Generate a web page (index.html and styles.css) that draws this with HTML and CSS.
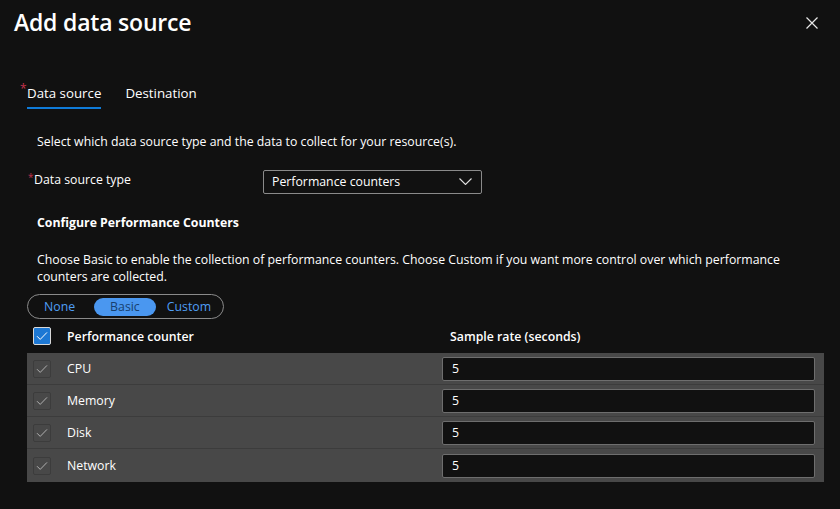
FILE: index.html
```html
<!DOCTYPE html>
<html lang="en">
<head>
<meta charset="utf-8">
<title>Add data source</title>
<link rel="stylesheet" href="styles.css">
</head>
<body>
<div class="panel">
  <header class="header">
    <h1 class="title">Add data source</h1>
    <button class="close" aria-label="Close">
      <svg width="12" height="12" viewBox="0 0 12 12"><path d="M0.5 0.5L11.5 11.5M11.5 0.5L0.5 11.5" stroke="#e8e8e8" stroke-width="1.2" fill="none"/></svg>
    </button>
  </header>

  <nav class="tabs">
    <div class="tab active"><span class="req">*</span><span class="tab-label">Data source</span></div>
    <div class="tab"><span class="tab-label">Destination</span></div>
  </nav>

  <section class="content">
    <p class="intro">Select which data source type and the data to collect for your resource(s).</p>

    <div class="field">
      <label class="field-label"><span class="req small">*</span>Data source type</label>
      <div class="dropdown">
        <span>Performance counters</span>
        <svg width="13" height="7" viewBox="0 0 13 7"><path d="M0.5 0.5L6.5 6.5L12.5 0.5" stroke="#e0e0e0" stroke-width="1.1" fill="none"/></svg>
      </div>
    </div>

    <h2 class="subhead">Configure Performance Counters</h2>
    <p class="desc">Choose Basic to enable the collection of performance counters. Choose Custom if you want more control over which performance counters are collected.</p>

    <div class="toggle">
      <span class="opt opt-none">None</span>
      <span class="opt selected">Basic</span>
      <span class="opt opt-custom">Custom</span>
    </div>

    <div class="thead">
      <div class="cell-check">
        <span class="cbox checked">
          <svg width="12" height="10" viewBox="0 0 12 10"><path d="M1 5.2L4.2 8.4L11 1.4" stroke="#ffffff" stroke-width="1" fill="none"/></svg>
        </span>
      </div>
      <div class="cell-name">Performance counter</div>
      <div class="cell-rate">Sample rate (seconds)</div>
    </div>

    <div class="tbody">
      <div class="row">
        <div class="cell-check"><span class="cbox"><svg width="12" height="10" viewBox="0 0 12 10"><path d="M1 5.2L4.2 8.4L11 1.4" stroke="#b0b0b0" stroke-width="1" fill="none"/></svg></span></div>
        <div class="cell-name">CPU</div>
        <div class="cell-rate"><div class="input">5</div></div>
      </div>
      <div class="row">
        <div class="cell-check"><span class="cbox"><svg width="12" height="10" viewBox="0 0 12 10"><path d="M1 5.2L4.2 8.4L11 1.4" stroke="#b0b0b0" stroke-width="1" fill="none"/></svg></span></div>
        <div class="cell-name">Memory</div>
        <div class="cell-rate"><div class="input">5</div></div>
      </div>
      <div class="row">
        <div class="cell-check"><span class="cbox"><svg width="12" height="10" viewBox="0 0 12 10"><path d="M1 5.2L4.2 8.4L11 1.4" stroke="#b0b0b0" stroke-width="1" fill="none"/></svg></span></div>
        <div class="cell-name">Disk</div>
        <div class="cell-rate"><div class="input">5</div></div>
      </div>
      <div class="row">
        <div class="cell-check"><span class="cbox"><svg width="12" height="10" viewBox="0 0 12 10"><path d="M1 5.2L4.2 8.4L11 1.4" stroke="#b0b0b0" stroke-width="1" fill="none"/></svg></span></div>
        <div class="cell-name">Network</div>
        <div class="cell-rate"><div class="input">5</div></div>
      </div>
    </div>
  </section>
</div>
</body>
</html>
```

FILE: styles.css
```css
* { box-sizing: border-box; }
html, body { margin: 0; padding: 0; }
body {
  background: #111111;
  color: #ffffff;
  font-family: "Open Sans", "Noto Sans", sans-serif;
  font-size: 12.3px;
  width: 840px;
  height: 509px;
  overflow: hidden;
}
.panel { padding: 6px 16px 0 0; }

.header {
  display: flex;
  justify-content: space-between;
  align-items: flex-start;
  padding-left: 14px;
}
.title {
  margin: 0;
  font-size: 23px;
  font-weight: 600;
  line-height: 32px;
  letter-spacing: -0.2px;
}
.close {
  background: none;
  border: 0;
  padding: 0;
  margin: 11px 6px 0 0;
  width: 12px;
  height: 12px;
  display: flex;
}

.tabs {
  display: flex;
  gap: 24px;
  margin-top: 45px;
  padding-left: 20px;
}
.tab {
  display: flex;
  font-size: 13.3px;
  line-height: 20px;
}
.tab-label {
  padding-bottom: 4px;
  border-bottom: 2px solid transparent;
}
.tab.active .tab-label { border-bottom-color: #0f7bd8; }
.req {
  color: #c4314b;
  font-size: 12px;
  line-height: 12px;
  width: 7px;
}
.req.small { font-size: 10px; width: 6px; }

.content { padding-left: 27px; }
.intro {
  margin: 24px 0 0 10px;
  line-height: 18px;
}
.field {
  display: flex;
  margin-top: 19px;
  align-items: flex-start;
}
.field-label {
  width: 236px;
  line-height: 20px;
  padding-left: 1px;
  display: flex;
}
.field-label .req { line-height: 14px; }
.dropdown {
  width: 219px;
  height: 24px;
  border: 1px solid #8a8a8a;
  border-radius: 2px;
  display: flex;
  align-items: center;
  justify-content: space-between;
  padding: 0 9px 1px 8px;
}
.subhead {
  margin: 20px 0 0 10px;
  font-size: 12.3px;
  font-weight: 700;
  line-height: 18px;
}
.desc {
  margin: 19px 0 0 10px;
  line-height: 17px;
  max-width: 760px;
}
.toggle {
  display: inline-flex;
  align-items: center;
  margin-top: 9px;
  height: 25px;
  border: 1px solid #8a8a8a;
  border-radius: 13px;
  padding: 0 2px;
}
.opt {
  color: #4f9ef5;
  line-height: 18px;
  height: 18px;
  border-radius: 9px;
}
.opt-none { padding: 0 19px 0 14px; }
.opt-custom { padding: 0 10px 0 11px; }
.opt.selected {
  background: #4a97f0;
  color: #17406e;
  padding: 0 16px;
}

.thead, .row {
  display: flex;
  align-items: center;
  width: 797px;
}
.thead {
  height: 34px;
  font-weight: 600;
}
.tbody { background: #484848; width: 797px; }
.row {
  height: 32px;
  border-bottom: 1px solid #3c3c3c;
}
.row:last-child { border-bottom: 0; height: 33px; }
.cell-check { width: 40px; padding-left: 6px; display: flex; }
.cell-name { width: 375px; }
.cell-rate { flex: 1; padding-right: 9px; }
.thead .cell-rate { padding-left: 8px; }
.cbox {
  width: 18px;
  height: 18px;
  border: 1px solid #3c3c3c;
  border-radius: 2px;
  display: flex;
  align-items: center;
  justify-content: center;
}
.cbox.checked {
  background: #1d78d4;
  border-color: #d8d8d8;
}
.input {
  height: 24px;
  background: #111111;
  border: 1px solid #6e6e6e;
  border-radius: 2px;
  line-height: 22px;
  padding-left: 9px;
}
```
